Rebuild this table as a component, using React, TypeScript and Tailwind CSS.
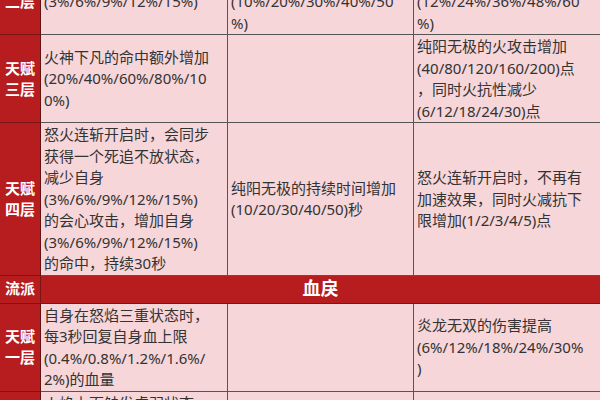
import React from 'react';

type Row = {
  label: string[];
  cells: string[][];
};

const rows: Row[] = [
  {
    label: ['天赋', '二层'],
    cells: [
      ['火神下凡的会心增加', '(3%/6%/9%/12%/15%)'],
      ['纯阳无极的会心伤害', '额外增加', '(10%/20%/30%/40%/50', '%)'],
      ['炎龙无双的会心伤害', '额外增加', '(12%/24%/36%/48%/60', '%)'],
    ],
  },
  {
    label: ['天赋', '三层'],
    cells: [
      ['火神下凡的命中额外增加', '(20%/40%/60%/80%/10', '0%)'],
      [],
      ['纯阳无极的火攻击增加', '(40/80/120/160/200)点', '，同时火抗性减少', '(6/12/18/24/30)点'],
    ],
  },
  {
    label: ['天赋', '四层'],
    cells: [
      [
        '怒火连斩开启时，会同步',
        '获得一个死追不放状态，',
        '减少自身',
        '(3%/6%/9%/12%/15%)',
        '的会心攻击，增加自身',
        '(3%/6%/9%/12%/15%)',
        '的命中，持续30秒',
      ],
      ['纯阳无极的持续时间增加', '(10/20/30/40/50)秒'],
      ['怒火连斩开启时，不再有', '加速效果，同时火减抗下', '限增加(1/2/3/4/5)点'],
    ],
  },
];

const rows2: Row[] = [
  {
    label: ['天赋', '一层'],
    cells: [
      ['自身在怒焰三重状态时，', '每3秒回复自身血上限', '(0.4%/0.8%/1.2%/1.6%/', '2%)的血量'],
      [],
      ['炎龙无双的伤害提高', '(6%/12%/18%/24%/30%', ')'],
    ],
  },
  {
    label: ['天赋', '二层'],
    cells: [
      ['火焰上面触发虚弱状态，', '火神下凡的会心增加', '(3%/6%/9%/12%/15%)', '(3%/6%/9%/12%/15%)'],
      [],
      [],
    ],
  },
];

const widths = ['w-[187px]', 'w-[186px]', 'flex-1'];

function TableRow({ row }: { row: Row }) {
  return (
    <div className="flex">
      <div className="w-[41px] shrink-0 flex flex-col items-center justify-center bg-[#b71c1f] border-r border-b border-r-[#5e1414] border-b-[#7a1616] text-white font-bold text-[15px] leading-[21px]">
        {row.label.map((l) => (
          <div key={l}>{l}</div>
        ))}
      </div>
      {row.cells.map((lines, i) => (
        <div
          key={i}
          className={`${widths[i]} shrink-0 flex flex-col justify-center pl-[3px] pt-px border-b border-[#555] ${
            i < 2 ? 'border-r' : ''
          }`}
        >
          {lines.map((line, j) => (
            <div key={j} className="whitespace-nowrap">
              {line}
            </div>
          ))}
        </div>
      ))}
    </div>
  );
}

export default function App() {
  return (
    <div className="w-[600px] h-[400px] overflow-hidden bg-[#f6d6d9]">
      <div className="-mt-[53px] text-[15px] leading-[21.5px] text-[#333] font-['Noto_Sans','Noto_Sans_CJK_SC',sans-serif]">
        {rows.map((row, i) => (
          <TableRow key={i} row={row} />
        ))}

        {/* school header */}
        <div className="flex h-[28px] bg-[#b71c1f] text-white font-bold">
          <div className="w-[41px] shrink-0 flex items-center justify-center border-r border-b border-r-[#7a1616] border-b-[#7a1616] text-[15px]">
            流派
          </div>
          <div className="flex-1 flex items-center justify-center border-b border-[#7a1616] text-[18px]">
            血戾
          </div>
        </div>

        {rows2.map((row, i) => (
          <TableRow key={i} row={row} />
        ))}
      </div>
    </div>
  );
}
